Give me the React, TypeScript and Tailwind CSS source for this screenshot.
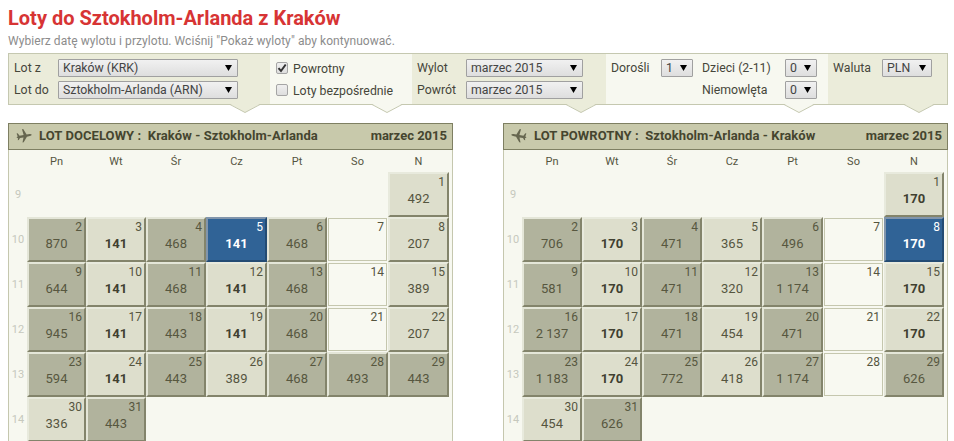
import clsx from "clsx";

type Tone = "dark" | "light" | "selected" | "empty";

interface Day {
  day: number;
  price?: string;
  tone: Tone;
  best?: boolean;
}

interface Calendar {
  label: string;
  route: string;
  back?: boolean;
  cols: string;
  days: Day[];
}

const weekdays = ["Pn", "Wt", "Śr", "Cz", "Pt", "So", "N"];
const weeks = [9, 10, 11, 12, 13, 14];

const tones: Record<Tone, string> = {
  dark: "border-2 border-t-[#e4e6d8] border-l-[#e4e6d8] border-r-[#83846b] border-b-[#83846b] bg-[#b1b39d] text-[#57573f]",
  light:
    "border-2 border-t-[#e8eadd] border-l-[#e8eadd] border-r-[#83846b] border-b-[#83846b] bg-[#dddecc] text-[#55553f]",
  selected:
    "border-2 border-t-[#8195ab] border-l-[#8195ab] border-r-[#234b73] border-b-[#234b73] bg-[#306396] text-white",
  empty: "m-px border border-[#c5c7ae] bg-[#f8f9f1] text-[#55553f]",
};

// first letter of each item: d = dark, l = light, b = light and cheapest, s = selected, e = no flights
const parseDays = (list: string): Day[] =>
  list.split(",").map((item, i) => {
    const kind = item[0];
    const price = item.slice(1);
    const tone: Tone =
      kind === "d" ? "dark" : kind === "s" ? "selected" : kind === "e" ? "empty" : "light";
    return { day: i + 1, price, tone, best: kind === "b" || kind === "s" };
  });

const calendars: Calendar[] = [
  {
    label: "LOT DOCELOWY :",
    route: "Kraków - Sztokholm-Arlanda",
    cols: "grid-cols-[18px_59px_60px_60px_61px_60px_61px_61px]",
    days: parseDays(
      "l492,d870,b141,d468,s141,d468,e,l207,d644,b141,d468,b141,d468,e,l389,d945,b141,d443,b141,d468,e,l207,d594,b141,d443,l389,d468,d493,d443,l336,d443"
    ),
  },
  {
    label: "LOT POWROTNY :",
    route: "Sztokholm-Arlanda - Kraków",
    back: true,
    cols: "grid-cols-[18px_60px_60px_60px_60px_61px_61px_60px]",
    days: parseDays(
      "b170,d706,b170,d471,l365,d496,e,s170,d581,b170,d471,l320,d1 174,e,b170,d2 137,b170,d471,l454,d471,e,b170,d1 183,b170,d772,l418,d1 174,e,d626,l454,d626"
    ),
  },
];

function Plane({ back }: { back?: boolean }) {
  return (
    <svg
      viewBox="0 0 16 16"
      className={clsx("h-4 w-4 shrink-0 fill-[#66664f]", back && "-scale-x-100")}
    >
      <path d="M.6 5.4 1.7 5.2 3.6 7.8 7.6 7 6 1.2 7.2 1 10.6 6.4 13.6 5.9Q15.6 5.8 15.7 6.7 15.6 7.6 13.9 8L10.9 8.7 7.7 14.2 6.5 14.4 7.5 9.4 4 10.1 2.8 12 1.8 12.2 2 10.2.6 9.6.8 8.9 1.7 8.6Z" />
    </svg>
  );
}

function Select({ value, className }: { value: string; className: string }) {
  return (
    <div
      className={clsx(
        "flex h-[18px] items-center justify-between rounded-[1px] border border-[#a0a0a0] bg-linear-to-b from-[#f1f1f1] to-[#dedede] pr-[5px] pl-1 leading-4 text-[#444]",
        className
      )}
    >
      <span className="whitespace-nowrap">{value}</span>
      <svg viewBox="0 0 7 6" className="h-1.5 w-[7px] fill-black">
        <path d="M0 0h7L3.5 6z" />
      </svg>
    </div>
  );
}

function Checkbox({ label, checked }: { label: string; checked?: boolean }) {
  return (
    <label className="flex h-[22px] items-center gap-[5px] pt-px">
      <span className="mb-0.5 h-3 w-3 rounded-[2px] border border-[#a5a5a5] bg-linear-to-b from-[#efefef] to-[#dedede]">
        {checked && (
          <svg viewBox="0 0 10 10" className="h-2.5 w-2.5 fill-none stroke-[#333] stroke-2">
            <path d="M1.5 5.2 4 8 8.7 1.5" />
          </svg>
        )}
      </span>
      {label}
    </label>
  );
}

// small pointer hanging from the bottom edge of a form section
function Notch({ className }: { className: string }) {
  return (
    <svg viewBox="0 0 32 10" className={clsx("absolute top-[50px] h-2.5 w-8", className)}>
      <path d="M1 0 16 8.5 31 0Z" />
      <path d="M0 .5H1L16 8.5 31 .5H32" className="fill-none stroke-[#c5c8b0]" />
    </svg>
  );
}

function SearchForm() {
  return (
    <div className="flex h-[52px] w-[940px] border border-[#c5c8b0] text-[12.3px] leading-[22px] text-[#46463a]">
      <section className="relative w-[261px] bg-[#ebecda] pt-[3px] pl-[5px]">
        <div className="grid grid-cols-[44px_180px] items-center">
          <span>Lot z</span>
          <Select value="Kraków (KRK)" className="w-[180px]" />
          <span>Lot do</span>
          <Select value="Sztokholm-Arlanda (ARN)" className="w-[180px]" />
        </div>
        <Notch className="left-[220px] fill-[#ebecda]" />
      </section>
      <section className="relative w-[142px] bg-[#f7f8f0] pt-[3px] pl-[6px]">
        <Checkbox label="Powrotny" checked />
        <Checkbox label="Loty bezpośrednie" />
        <Notch className="left-[101px] fill-[#f7f8f0]" />
      </section>
      <section className="relative w-[194px] bg-[#ebecda] pt-[3px] pl-[5px]">
        <div className="grid grid-cols-[49px_117px] items-center">
          <span>Wylot</span>
          <Select value="marzec 2015" className="w-[117px]" />
          <span>Powrót</span>
          <Select value="marzec 2015" className="w-[117px]" />
        </div>
        <Notch className="left-[153px] fill-[#ebecda]" />
      </section>
      <section className="relative w-[222px] bg-[#f7f8f0] pt-[3px] pl-[5px]">
        <div className="grid grid-cols-[50px_41px_83px_32px] items-center">
          <span>Dorośli</span>
          <Select value="1" className="w-8" />
          <span>Dzieci (2-11)</span>
          <Select value="0" className="w-8" />
          <span className="col-start-3">Niemowlęta</span>
          <Select value="0" className="w-8" />
        </div>
        <Notch className="left-[177px] fill-[#f7f8f0]" />
      </section>
      <section className="relative flex-1 bg-[#ebecda] pt-[3px] pl-[5px]">
        <div className="grid grid-cols-[49px_50px] items-center">
          <span>Waluta</span>
          <Select value="PLN" className="w-[50px]" />
        </div>
        <Notch className="left-[75px] fill-[#ebecda]" />
      </section>
    </div>
  );
}

function DayCell({ day, price, tone, best }: Day) {
  return (
    <div className={clsx("flex flex-col", tones[tone], day === 1 && "col-start-8")}>
      <span className="pr-0.5 text-right text-[12px] leading-4">{day}</span>
      <span
        className={clsx(
          "text-center text-[13px] leading-[17px]",
          best && "font-bold",
          best && tone !== "selected" && "text-[#404030]"
        )}
      >
        {price}
      </span>
    </div>
  );
}

function FlightCalendar({ label, route, back, cols, days }: Calendar) {
  return (
    <section className="h-[330px] w-[445px] border-x border-[#c5c7ae] bg-[#f7f8f0]">
      <header className="-mx-px flex h-[27px] items-center border border-[#7e7f62] bg-[#c8c9ab] pr-[5px] pb-0.5 pl-[7px] text-[13px] font-bold text-[#45452f]">
        <Plane back={back} />
        <h2 className="ml-[7px] flex-1 whitespace-pre tracking-[0.07px]">
          {label}
          {"  "}
          {route}
        </h2>
        <span>marzec 2015</span>
      </header>
      <div className={clsx("grid h-[22px] text-center text-[11px] leading-6 text-[#55553f]", cols)}>
        {weekdays.map((name) => (
          <span key={name} className="first:col-start-2">
            {name}
          </span>
        ))}
      </div>
      <div className={clsx("grid auto-rows-[45px]", cols)}>
        {weeks.map((week, i) => {
          const from = i === 0 ? 0 : i * 7 - 6;
          const to = i * 7 + 1;
          return (
            <div key={week} className="contents">
              <span className="col-start-1 text-center text-[11px] leading-[45px] text-[#c6c8bd]">
                {week}
              </span>
              {days.slice(from, to).map((day) => (
                <DayCell key={day.day} {...day} />
              ))}
            </div>
          );
        })}
      </div>
    </section>
  );
}

export default function App() {
  return (
    <main className="h-[441px] w-[954px] overflow-hidden bg-white pl-2 font-['Roboto','Liberation_Sans',sans-serif]">
      <h1 className="pt-[5px] text-[20px] leading-[26px] font-bold text-[#d73434]">
        Loty do Sztokholm-Arlanda z Kraków
      </h1>
      <p className="h-[22px] text-[12px] leading-5 tracking-[0.06px] text-[#8c8c8c]">
        Wybierz datę wylotu i przylotu. Wciśnij "Pokaż wyloty" aby kontynuować.
      </p>
      <SearchForm />
      <div className="mt-[18px] flex gap-[50px]">
        {calendars.map((calendar) => (
          <FlightCalendar key={calendar.label} {...calendar} />
        ))}
      </div>
    </main>
  );
}
